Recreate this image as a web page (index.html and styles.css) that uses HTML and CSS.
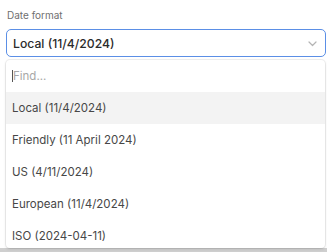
FILE: index.html
```html
<!DOCTYPE html>
<html>
<head>
<meta charset="utf-8">
<link rel="stylesheet" href="styles.css">
</head>
<body>
<div class="page">
  <div class="field">
    <div class="label">Date format</div>
    <div class="select">
      <span class="value">Local (11/4/2024)</span>
      <svg class="chev" width="9" height="6" viewBox="0 0 9 6"><path d="M1 1l3.5 3.5 3.5-3.5" fill="none" stroke="#b4b4b4" stroke-width="1.2" stroke-linecap="round" stroke-linejoin="round"/></svg>
    </div>
  </div>
  <div class="backdrop"></div>
  <div class="menu">
    <div class="find"><span class="caret"></span><span class="ph">Find...</span></div>
    <div class="opt active">Local (11/4/2024)</div>
    <div class="opt">Friendly (11 April 2024)</div>
    <div class="opt">US (4/11/2024)</div>
    <div class="opt">European (11/4/2024)</div>
    <div class="opt">ISO (2024-04-11)</div>
  </div>
</div>
</body>
</html>
```
FILE: styles.css
```css
html, body { margin: 0; padding: 0; background: #fff; }
body { width: 327px; height: 252px; overflow: hidden; font-family: "Inter", "Liberation Sans", sans-serif; position: relative; }
.page { padding: 9px 1px 0 6px; }
.label { font-size: 10px; color: #6f6f6f; padding-left: 1px; height: 12px; line-height: 12px; margin-bottom: 8px; }
.select { height: 26px; border: 1.5px solid #5b8fe6; border-radius: 5px; display: flex; align-items: center; justify-content: space-between; padding: 0 8px 0 6px; }
.value { font-size: 12.2px; color: #2b2b2b; font-weight: 500; }
.chev { margin-top: 1px; }
.backdrop { position: absolute; left: 0; right: 0; bottom: 0; height: 4px; background: #cfcfcf; }
.menu { position: absolute; left: 6px; top: 60px; width: 319px; height: 188px; background: #fff; border-radius: 4px; box-shadow: 0 0 0 1px rgba(0,0,0,0.06), 0 1px 3px rgba(0,0,0,0.12); overflow: hidden; }
.find { height: 32px; display: flex; align-items: center; padding-left: 6px; }
.caret { width: 1px; height: 12px; background: #555; }
.ph { font-size: 11.5px; color: #a8a8a8; }
.opt { height: 32px; line-height: 32px; padding-left: 6px; font-size: 11.5px; color: #474747; }
.opt.active { background: #f3f3f3; }
```
